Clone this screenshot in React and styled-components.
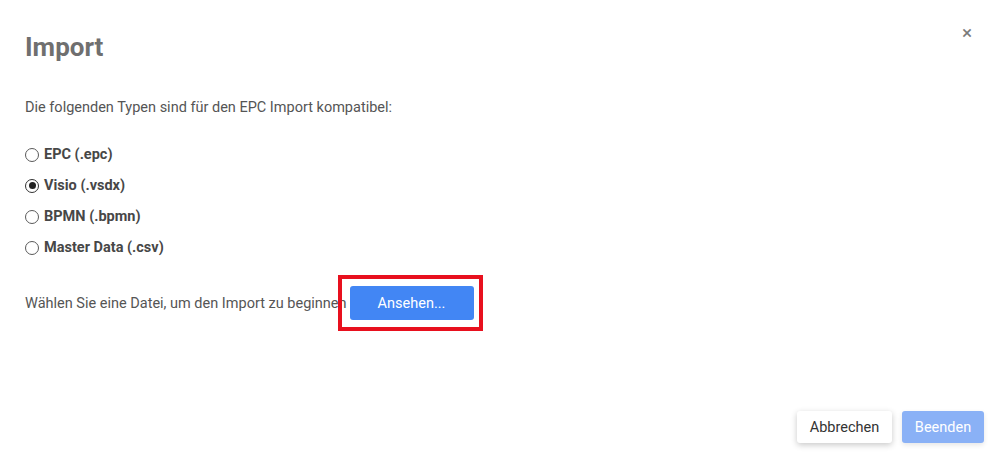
import React, { useState } from "react";
import styled, { createGlobalStyle } from "styled-components";

const GlobalStyle = createGlobalStyle`
  html, body {
    margin: 0;
    padding: 0;
    background: #ffffff;
  }
  body {
    font-family: Roboto, "Liberation Sans", Arial, sans-serif;
  }
`;

const Dialog = styled.div`
  position: relative;
  box-sizing: border-box;
  min-height: 100vh;
  padding: 31px 16px 12px 25px;
  display: flex;
  flex-direction: column;
  background: #fff;
`;

const CloseButton = styled.button`
  position: absolute;
  top: 23px;
  right: 23px;
  width: 20px;
  height: 20px;
  padding: 0;
  border: none;
  background: transparent;
  color: #7a7a7a;
  font-size: 19px;
  line-height: 20px;
  cursor: pointer;
  font-family: Roboto, "Liberation Sans", Arial, sans-serif;
`;

const Title = styled.h1`
  margin: 0;
  font-size: 26px;
  line-height: 32px;
  font-weight: 700;
  color: #6f6f6f;
`;

const Text = styled.p`
  margin: 35px 0 0;
  font-size: 14.5px;
  line-height: 20px;
  color: #555;
`;

const Options = styled.div`
  margin-top: 21px;
  display: flex;
  flex-direction: column;
`;

const Option = styled.label`
  display: flex;
  align-items: center;
  gap: 5px;
  height: 31px;
  font-size: 14.5px;
  font-weight: 700;
  color: #474747;
  cursor: pointer;
`;

const Radio = styled.span`
  box-sizing: border-box;
  width: 14px;
  height: 14px;
  border-radius: 50%;
  border: 1.5px solid ${(p) => (p.$checked ? "#333" : "#5a5a5a")};
  display: flex;
  align-items: center;
  justify-content: center;

  &::after {
    content: "";
    width: 7px;
    height: 7px;
    border-radius: 50%;
    background: ${(p) => (p.$checked ? "#222" : "transparent")};
  }
`;

const FileRow = styled.div`
  margin-top: 23px;
  display: flex;
  align-items: center;
  font-size: 14.5px;
  color: #555;
`;

const Highlight = styled.span`
  position: relative;
  display: inline-flex;
  margin-left: 3px;
`;

const Marker = styled.span`
  position: absolute;
  top: -11px;
  bottom: -11px;
  left: -12px;
  right: -9px;
  border: 4px solid #e8101e;
  pointer-events: none;
`;

const Button = styled.button`
  box-sizing: border-box;
  height: ${(p) => p.$height || "32px"};
  width: ${(p) => p.$width};
  padding: 0;
  border: none;
  border-radius: 3px;
  font-family: Roboto, "Liberation Sans", Arial, sans-serif;
  font-size: 14.5px;
  cursor: pointer;
  color: ${(p) => (p.$variant === "plain" ? "#333" : "#fff")};
  background: ${(p) =>
    p.$variant === "plain"
      ? "#fff"
      : p.$variant === "disabled"
      ? "#8ab1f6"
      : "#4286f4"};
  box-shadow: ${(p) =>
    p.$variant === "plain"
      ? "0 2px 6px rgba(0, 0, 0, 0.22)"
      : p.$variant === "disabled"
      ? "0 2px 5px rgba(0, 0, 0, 0.1)"
      : "none"};
`;

const Footer = styled.div`
  margin-top: auto;
  display: flex;
  justify-content: flex-end;
  gap: 10px;
`;

const types = [
  { id: "epc", label: "EPC (.epc)" },
  { id: "vsdx", label: "Visio (.vsdx)" },
  { id: "bpmn", label: "BPMN (.bpmn)" },
  { id: "csv", label: "Master Data (.csv)" },
];

const ImportDialog = () => {
  const [type, setType] = useState("vsdx");

  return (
    <Dialog>
      <GlobalStyle />
      <CloseButton aria-label="Schließen">×</CloseButton>
      <Title>Import</Title>
      <Text>Die folgenden Typen sind für den EPC Import kompatibel:</Text>

      <Options>
        {types.map((t) => (
          <Option key={t.id} onClick={() => setType(t.id)}>
            <Radio $checked={type === t.id} />
            {t.label}
          </Option>
        ))}
      </Options>

      <FileRow>
        Wählen Sie eine Datei, um den Import zu beginnen
        <Highlight>
          <Button $width="124px" $height="34px">
            Ansehen...
          </Button>
          <Marker />
        </Highlight>
      </FileRow>

      <Footer>
        <Button $variant="plain" $width="95px">
          Abbrechen
        </Button>
        <Button $variant="disabled" $width="82px">
          Beenden
        </Button>
      </Footer>
    </Dialog>
  );
};

export default ImportDialog;
